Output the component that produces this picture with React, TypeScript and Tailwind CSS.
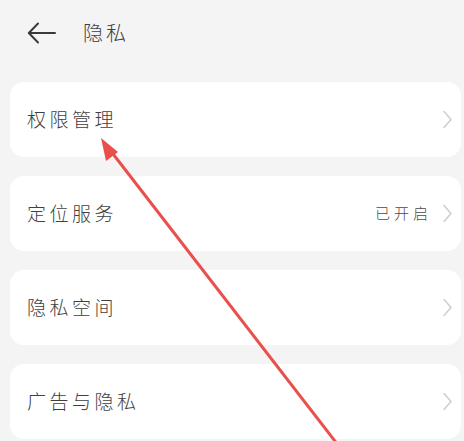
const items = [
  { label: "权限管理" },
  { label: "定位服务", value: "已开启" },
  { label: "隐私空间" },
  { label: "广告与隐私" },
]

const Chevron = () => (
  <svg width="11" height="19" viewBox="0 0 11 19" fill="none" className="shrink-0">
    <path d="M2 1.5 L9 9.5 L2 17.5" stroke="#cdcdcd" strokeWidth="1.5" strokeLinecap="round" strokeLinejoin="round" />
  </svg>
)

export default function App() {
  return (
    <div
      className="relative h-[441px] w-[464px] overflow-hidden bg-[#f4f4f4] font-light text-[#404040]"
      style={{ fontFamily: '"Noto Sans CJK SC", "Noto Sans", sans-serif' }}
    >
      {/* header */}
      <div className="flex h-[82px] items-start pt-[20px]">
        <div className="flex h-[26px] items-center pl-[27px]">
          <svg width="29" height="22" viewBox="0 0 29 22" fill="none">
            <path d="M28 11 H2 M11 1.5 L1.8 11 L11 20.5" stroke="#3a3a3a" strokeWidth="2" strokeLinecap="round" strokeLinejoin="round" />
          </svg>
        </div>
        <span className="ml-[27px] text-[20px] leading-[26px] tracking-[3px]">隐私</span>
      </div>

      {/* list */}
      <div className="ml-[10px] mr-[3px] flex flex-col gap-[19px]">
        {items.map((item) => (
          <div key={item.label} className="flex h-[75px] items-center rounded-[14px] bg-white pl-[17px] pr-[8px]">
            <span className="flex-1 text-[19px] tracking-[3.5px]">{item.label}</span>
            {item.value && <span className="mr-[10px] text-[15px] tracking-[4px] text-[#4a4a4a]">{item.value}</span>}
            <Chevron />
          </div>
        ))}
      </div>

      {/* annotation arrow */}
      <svg className="pointer-events-none absolute left-0 top-0" width="464" height="441" viewBox="0 0 464 441">
        <line x1="338" y1="445" x2="110" y2="150" stroke="#ea4f4c" strokeWidth="3" />
        <polygon points="101,138 118,152 106,161" fill="#ea4f4c" />
      </svg>
    </div>
  )
}
